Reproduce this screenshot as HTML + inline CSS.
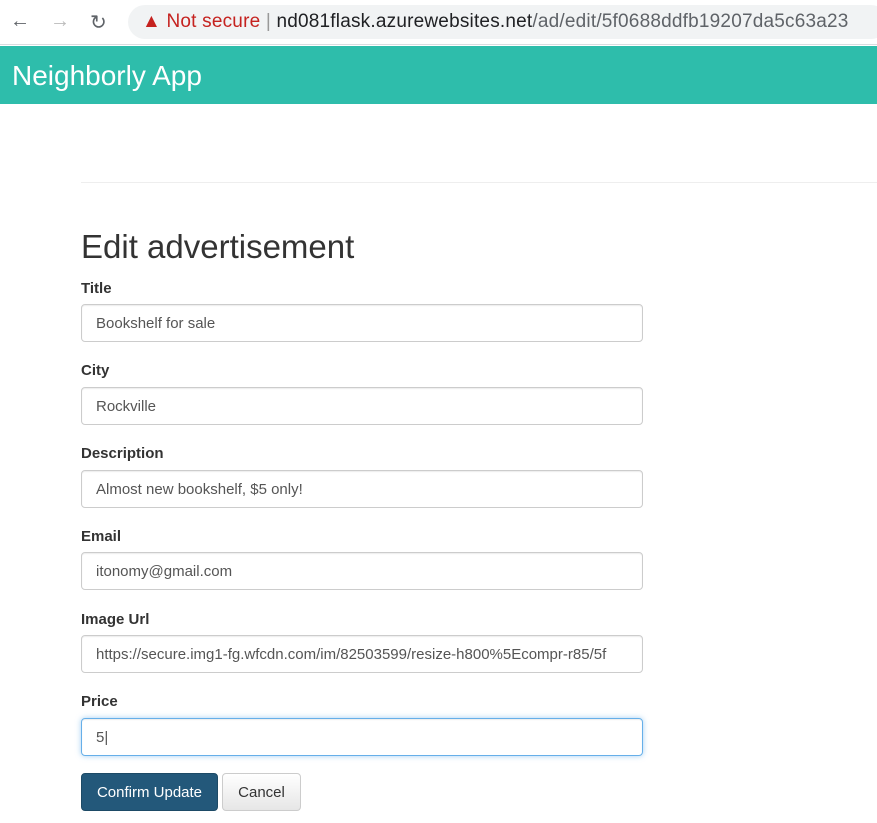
<!DOCTYPE html>
<html><head><meta charset="utf-8"><style>
*{box-sizing:border-box}
body{margin:0;width:877px;height:823px;overflow:hidden;background:#fff;font-family:"Liberation Sans",Arial,sans-serif;color:#333}
.bar{position:absolute;left:0;top:0;width:877px;height:45px;background:#fff;border-bottom:1px solid #dadce0}
.nav{position:absolute;top:10px;font-size:20px;color:#5f6368}
.url{position:absolute;left:128px;top:5px;width:760px;height:34px;background:#f1f3f4;border-radius:17px;font-size:19px;line-height:34px;padding-left:14px;white-space:nowrap;letter-spacing:0.2px}
.hdr{position:absolute;left:0;top:46px;width:877px;height:58px;background:#2ebdab;color:#fff;font-size:28px;line-height:60px;padding-left:12px}
hr{position:absolute;left:81px;top:182px;width:796px;margin:0;border:0;border-top:1px solid #eee}
h1{position:absolute;left:81px;top:228px;margin:0;font-size:33px;font-weight:400;color:#333}
.lbl{position:absolute;left:81px;font-size:15px;font-weight:bold;color:#333}
.in{position:absolute;left:81px;width:562px;height:38px;border:1px solid #ccc;border-radius:4px;font-size:15px;line-height:38px;padding-left:14px;color:#555;white-space:nowrap;overflow:hidden;box-shadow:inset 0 1px 1px rgba(0,0,0,.075)}
.focus{border-color:#66afe9;box-shadow:inset 0 1px 1px rgba(0,0,0,.075),0 0 6px rgba(102,175,233,.6)}
.btn{position:absolute;top:773px;height:38px;border-radius:4px;font-size:15px;line-height:38px;text-align:center}
</style></head><body>
<div class="bar">
<span class="nav" style="left:10px">&#8592;</span>
<span class="nav" style="left:50px;color:#bbb">&#8594;</span>
<span class="nav" style="left:90px">&#8635;</span>
<div class="url"><span style="color:#c5221f">&#9650; Not secure</span> <span style="color:#999">|</span> <span style="color:#202124">nd081flask.azurewebsites.net</span><span style="color:#5f6368">/ad/edit/5f0688ddfb19207da5c63a23</span></div>
</div>
<div class="hdr">Neighborly App</div>
<hr>
<h1>Edit advertisement</h1>
<div class="lbl" style="top:280px">Title</div><div class="in" style="top:304px">Bookshelf for sale</div>
<div class="lbl" style="top:362px">City</div><div class="in" style="top:387px">Rockville</div>
<div class="lbl" style="top:445px">Description</div><div class="in" style="top:470px">Almost new bookshelf, $5 only!</div>
<div class="lbl" style="top:528px">Email</div><div class="in" style="top:552px">itonomy@gmail.com</div>
<div class="lbl" style="top:611px">Image Url</div><div class="in" style="top:635px">https://secure.img1-fg.wfcdn.com/im/82503599/resize-h800%5Ecompr-r85/5f</div>
<div class="lbl" style="top:693px">Price</div><div class="in focus" style="top:718px">5|</div>
<div class="btn" style="left:81px;width:137px;background:#23587a;color:#fff;border:1px solid #1d4a66">Confirm Update</div>
<div class="btn" style="left:222px;width:79px;background:linear-gradient(#fff,#e6e6e6);border:1px solid #ccc;color:#333">Cancel</div>
</body></html>
